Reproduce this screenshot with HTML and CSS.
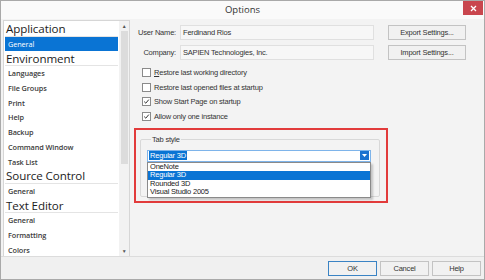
FILE: index.html
```html
<!DOCTYPE html>
<html lang="en">
<head>
    <meta name="viewport" content="width=device-width, initial-scale=1.0">
    <title>Options</title>
    <link rel="stylesheet" href="styles.css">
</head>
<body>

    <div class="window">
        <div class="titlebar">
            <span></span>
            <span class="title">Options</span>
            <span class="close">
                <svg width="7" height="7" viewBox="0 0 7 7"><path d="M1 1L6 6M6 1L1 6" stroke="#fff" stroke-width="1.3"/></svg>
            </span>
        </div>

        <div class="content">
            <div class="sidebar">
                <ul class="tree">
                    <li class="group">Application</li>
                    <li class="item selected">General</li>
                    <li class="group">Environment</li>
                    <li class="item">Languages</li>
                    <li class="item">File Groups</li>
                    <li class="item">Print</li>
                    <li class="item">Help</li>
                    <li class="item">Backup</li>
                    <li class="item">Command Window</li>
                    <li class="item">Task List</li>
                    <li class="group">Source Control</li>
                    <li class="item">General</li>
                    <li class="group">Text Editor</li>
                    <li class="item">General</li>
                    <li class="item">Formatting</li>
                    <li class="item">Colors</li>
                </ul>
                <div class="scrollbar">
                    <span class="arrow">&#9650;</span>
                    <span class="track"><span class="thumb"></span></span>
                    <span class="arrow">&#9660;</span>
                </div>
            </div>

            <div class="main">
                <div class="fields">
                    <label>User Name:</label>
                    <div class="input">Ferdinand Rios</div>
                    <button class="btn">Export Settings...</button>
                    <label>Company:</label>
                    <div class="input">SAPIEN Technologies, Inc.</div>
                    <button class="btn">Import Settings...</button>
                </div>

                <div class="checks">
                    <div class="check"><span class="box"></span><span><u>R</u>estore last working directory</span></div>
                    <div class="check"><span class="box"></span><span>Restore last opened files at startup</span></div>
                    <div class="check"><span class="box on"><svg width="7" height="7" viewBox="0 0 7 7"><path d="M1.2 3.6L2.8 5.2L5.8 1.6" fill="none" stroke="#333" stroke-width="1"/></svg></span><span>Show Start Page on startup</span></div>
                    <div class="check"><span class="box on"><svg width="7" height="7" viewBox="0 0 7 7"><path d="M1.2 3.6L2.8 5.2L5.8 1.6" fill="none" stroke="#333" stroke-width="1"/></svg></span><span>Allow only one instance</span></div>
                </div>

                <div class="highlight">
                    <fieldset class="groupbox">
                        <legend>Tab style</legend>
                        <div class="combo">
                            <span class="combo-value"><span class="sel">Regular 3D</span></span>
                            <span class="combo-btn">
                                <svg width="5" height="3" viewBox="0 0 5 3"><path d="M0 0H5L2.5 3Z" fill="#fff"/></svg>
                            </span>
                            <ul class="dropdown">
                                <li>OneNote</li>
                                <li class="active">Regular 3D</li>
                                <li>Rounded 3D</li>
                                <li>Visual Studio 2005</li>
                            </ul>
                        </div>
                    </fieldset>
                </div>
            </div>
        </div>

        <div class="footer">
            <button class="btn default">OK</button>
            <button class="btn">Cancel</button>
            <button class="btn">Help</button>
        </div>
    </div>

</body>
</html>
```

FILE: styles.css
```css
body, html {
    margin: 0;
    overflow: hidden;
    background: #fff;
}

.window {
    width: 485px;
    height: 280px;
    box-sizing: border-box;
    border: 1px solid #a9a9a9;
    background: #f3f3f3;
    display: flex;
    flex-direction: column;
    font-family: "Liberation Sans", Arial, sans-serif;
    font-size: 7.5px;
    letter-spacing: -0.2px;
    color: #222;
}

/* Title bar */
.titlebar {
    height: 18px;
    flex: none;
    background: #fafafa;
    display: grid;
    grid-template-columns: 1fr auto 1fr;
    align-items: start;
}

.title {
    font-family: "Open Sans", sans-serif;
    font-size: 9.5px;
    letter-spacing: 0;
    color: #333;
    line-height: 18px;
}

.close {
    justify-self: end;
    width: 20px;
    height: 14px;
    margin-right: 1px;
    background: #c9464e;
    display: flex;
    align-items: center;
    justify-content: center;
}

.content {
    flex: 1;
    display: flex;
    min-height: 0;
}

/* Left tree */
.sidebar {
    width: 127px;
    box-sizing: border-box;
    margin: 1px 0 0 2px;
    border: 1px solid #d6d6d6;
    border-bottom: none;
    background: #fff;
    display: flex;
    overflow: hidden;
}

.tree {
    list-style: none;
    margin: 0;
    padding: 1px 1px 0;
    flex: 1;
    font-family: "Open Sans", sans-serif;
}

.tree li {
    height: 14.7px;
    box-sizing: border-box;
    display: flex;
    align-items: center;
    white-space: nowrap;
}

.group {
    font-size: 11.6px;
    letter-spacing: -0.1px;
    color: #1c1c1c;
    padding-left: 1px;
    border-bottom: 1px solid #e4e4e4;
}

.item {
    font-size: 7.3px;
    font-weight: 600;
    letter-spacing: -0.1px;
    color: #3b3b3b;
    padding-left: 3px;
}

.item.selected {
    background: #0a74d4;
    color: #fff;
    font-weight: 400;
}

.scrollbar {
    width: 10px;
    flex: none;
    background: #f2f2f2;
    display: flex;
    flex-direction: column;
    align-items: center;
}

.arrow {
    font-size: 5px;
    color: #555;
    height: 10px;
    line-height: 10px;
}

.track {
    flex: 1;
    width: 100%;
    display: flex;
    justify-content: center;
}

.thumb {
    width: 7px;
    height: 133px;
    background: #dcdcdc;
}

/* Main area */
.main {
    flex: 1;
    padding-top: 6px;
}

.fields {
    display: grid;
    grid-template-columns: 46px 194px 88px;
    column-gap: 4px;
    row-gap: 5px;
    align-items: center;
}

.fields label {
    text-align: right;
    color: #333;
}

.fields .btn {
    margin-left: 10px;
}

.input {
    height: 15px;
    box-sizing: border-box;
    border: 1px solid #e0e0e0;
    background: #f7f7f7;
    padding-left: 2px;
    line-height: 13px;
    color: #333;
}

.btn {
    height: 15px;
    box-sizing: border-box;
    border: 1px solid #c3c3c3;
    background: #f1f1f1;
    font-family: "Liberation Sans", Arial, sans-serif;
    font-size: 7.5px;
    letter-spacing: -0.2px;
    color: #333;
    padding: 0;
}

.checks {
    margin-top: 5px;
    padding-left: 12px;
}

.check {
    height: 14.7px;
    display: flex;
    align-items: center;
    gap: 3px;
    color: #333;
}

.box {
    width: 7px;
    height: 7px;
    border: 1px solid #8a8a8a;
    background: #fff;
    display: flex;
}

/* Highlighted "Tab style" group */
.highlight {
    margin: 4px 0 0 4px;
    width: 254px;
    height: 75px;
    box-sizing: border-box;
    border: 2px solid #e23b3b;
    padding: 5px 6px 0 4px;
}

.groupbox {
    margin: 0;
    height: 62px;
    box-sizing: border-box;
    border: 1px solid #d8d8d8;
    border-radius: 2px;
    padding: 6px 8px 0 6px;
}

.groupbox legend {
    padding: 0 1px;
    margin-left: 4px;
    color: #333;
}

.combo {
    position: relative;
    height: 12px;
    box-sizing: border-box;
    border: 1px solid #7eb4ea;
    background: #fff;
    display: flex;
    align-items: center;
}

.combo-value {
    flex: 1;
    padding-left: 1px;
}

.sel {
    background: #0a74d4;
    color: #fff;
    padding: 0 1px;
}

.combo-btn {
    width: 9px;
    height: 9px;
    margin-right: 1px;
    background: #1b72d0;
    display: flex;
    align-items: center;
    justify-content: center;
}

.dropdown {
    position: absolute;
    top: 11px;
    left: -1px;
    right: -1px;
    list-style: none;
    margin: 0;
    padding: 0 0 1px;
    background: #fff;
    border: 1px solid #8a8a8a;
    box-shadow: 2px 2px 2px rgba(0, 0, 0, 0.2);
    z-index: 2;
}

.dropdown li {
    height: 8.4px;
    line-height: 8.4px;
    padding-left: 2px;
    color: #222;
}

.dropdown li.active {
    background: #0a74d4;
    color: #fff;
}

/* Footer */
.footer {
    height: 23px;
    flex: none;
    box-sizing: border-box;
    border-top: 1px solid #dcdcdc;
    background: #f0f0f0;
    display: flex;
    justify-content: flex-end;
    gap: 3px;
    padding: 4px 3px 0 0;
}

.footer .btn {
    width: 49px;
}

.footer .btn.default {
    border-color: #3a83c4;
}
```
